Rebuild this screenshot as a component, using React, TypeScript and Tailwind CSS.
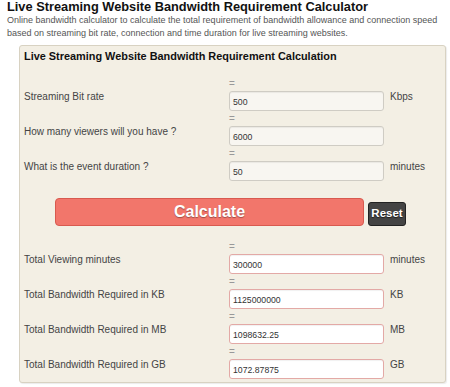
import React from "react";

const inputRows = [
  { label: "Streaming Bit rate", value: "500", unit: "Kbps" },
  { label: "How many viewers will you have ?", value: "6000", unit: "" },
  { label: "What is the event duration ?", value: "50", unit: "minutes" },
];

const outputRows = [
  { label: "Total Viewing minutes", value: "300000", unit: "minutes" },
  { label: "Total Bandwidth Required in KB", value: "1125000000", unit: "KB" },
  { label: "Total Bandwidth Required in MB", value: "1098632.25", unit: "MB" },
  { label: "Total Bandwidth Required in GB", value: "1072.87875", unit: "GB" },
];

function Row({
  label,
  value,
  unit,
  out,
}: {
  label: string;
  value: string;
  unit: string;
  out?: boolean;
}) {
  return (
    <div className="flex h-[35px]">
      <div className="w-[205px] pt-[12px] text-[10px] leading-[12px] text-[#444]">{label}</div>
      <div className="w-[155px] flex flex-col">
        <div className="h-[12px] text-[10px] leading-[10px] text-[#999]">=</div>
        <div
          className={
            out
              ? "h-[20px] rounded-[3px] border border-[#e3a9a6] bg-white pl-[3px] text-[8.7px] leading-[20px] text-[#333] shadow-[inset_0_1px_1px_rgba(0,0,0,0.06)]"
              : "h-[20px] rounded-[3px] border border-[#cfccc4] bg-[#f8f6f1] pl-[3px] text-[8.7px] leading-[20px] text-[#333] shadow-[inset_0_1px_1px_rgba(0,0,0,0.06)]"
          }
        >
          {value}
        </div>
      </div>
      <div className="pl-[6px] pt-[12px] text-[10px] leading-[12px] text-[#444]">{unit}</div>
    </div>
  );
}

export default function App() {
  return (
    <div
      className="w-[450px] h-[387px] bg-white overflow-hidden"
      style={{ fontFamily: '"Liberation Sans", Arial, sans-serif' }}
    >
      <div className="pl-[7px]">
        <div className="text-[12.8px] font-bold leading-[13px] text-[#111]">
          Live Streaming Website Bandwidth Requirement Calculator
        </div>
        <div className="mt-[1px] text-[9px] leading-[13px] text-[#555] w-[440px]">
          Online bandwidth calculator to calculate the total requirement of bandwidth allowance and connection speed
          <br />
          based on streaming bit rate, connection and time duration for live streaming websites.
        </div>
      </div>
      <div className="ml-[19px] mt-[5px] w-[427px] h-[338px] rounded-[3px] border border-[#d8d2c2] bg-[#f3efe4] shadow-[1px_1px_1px_rgba(0,0,0,0.08)] pl-[4px]">
        <div className="pt-[3px] text-[10.9px] font-bold leading-[14px] text-[#111]">
          Live Streaming Website Bandwidth Requirement Calculation
        </div>
        <div className="mt-[16px]">
          {inputRows.map((r) => (
            <Row key={r.label} {...r} />
          ))}
        </div>
        <div className="flex items-center mt-[13px] h-[30px]">
          <div className="ml-[31px] w-[309px] h-[28px] rounded-[4px] border border-[#d85a4f] bg-[#f2766b] flex items-center justify-center text-[16px] font-bold text-white [text-shadow:0_1px_1px_rgba(0,0,0,0.35)]">
            Calculate
          </div>
          <div className="ml-[4px] w-[38px] h-[24px] mt-[4px] rounded-[3px] border border-[#222] bg-[#444] flex items-center justify-center text-[11.5px] font-bold text-white [text-shadow:0_1px_1px_rgba(0,0,0,0.6)]">
            Reset
          </div>
        </div>
        <div className="mt-[15px]">
          {outputRows.map((r) => (
            <Row key={r.label} {...r} out />
          ))}
        </div>
      </div>
    </div>
  );
}
